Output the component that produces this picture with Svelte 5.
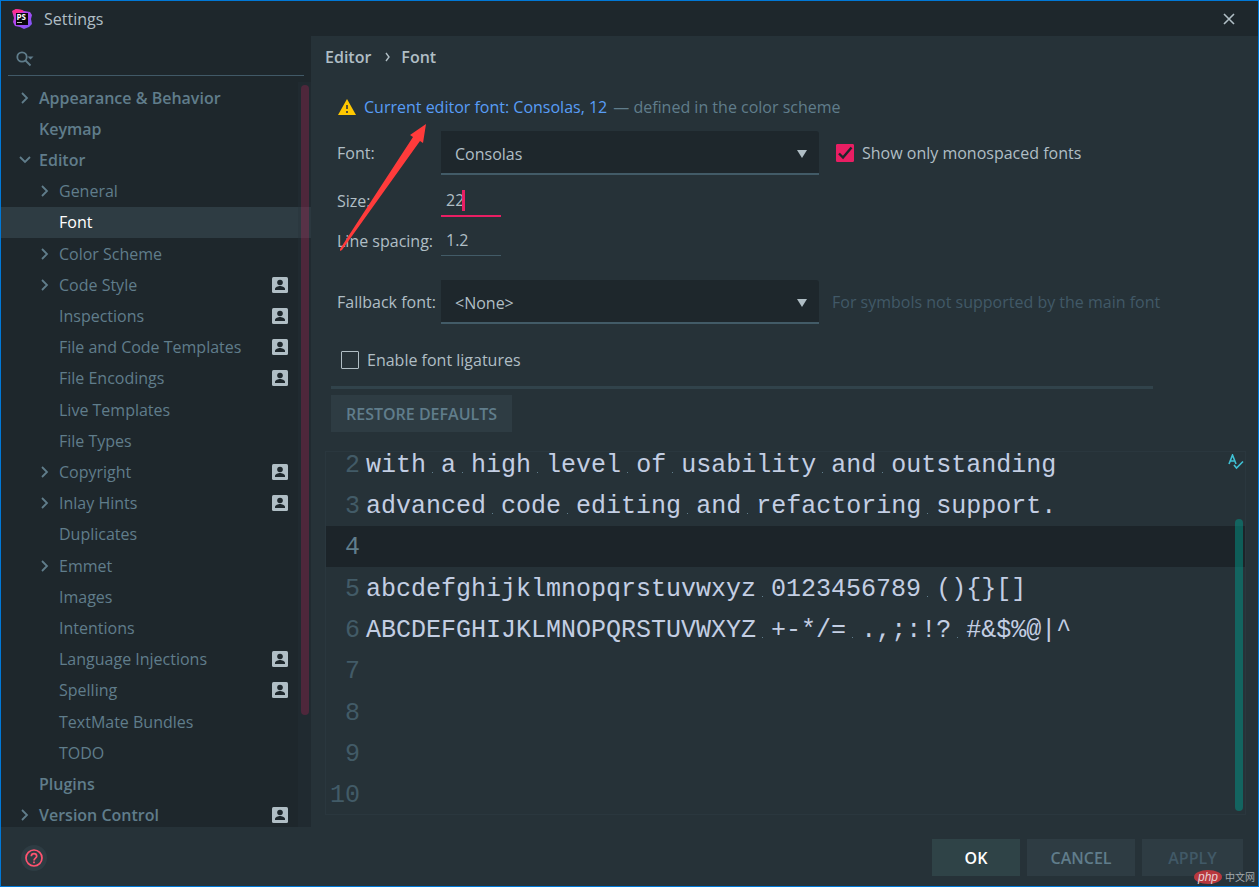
<script lang="ts">
  interface TreeItem {
    label: string;
    level?: number;
    arrow?: 'right' | 'down';
    project?: boolean;
  }

  const tree: TreeItem[] = [
    { label: 'Appearance & Behavior', arrow: 'right' },
    { label: 'Keymap' },
    { label: 'Editor', arrow: 'down' },
    { label: 'General', level: 1, arrow: 'right' },
    { label: 'Font', level: 1 },
    { label: 'Color Scheme', level: 1, arrow: 'right' },
    { label: 'Code Style', level: 1, arrow: 'right', project: true },
    { label: 'Inspections', level: 1, project: true },
    { label: 'File and Code Templates', level: 1, project: true },
    { label: 'File Encodings', level: 1, project: true },
    { label: 'Live Templates', level: 1 },
    { label: 'File Types', level: 1 },
    { label: 'Copyright', level: 1, arrow: 'right', project: true },
    { label: 'Inlay Hints', level: 1, arrow: 'right', project: true },
    { label: 'Duplicates', level: 1 },
    { label: 'Emmet', level: 1, arrow: 'right' },
    { label: 'Images', level: 1 },
    { label: 'Intentions', level: 1 },
    { label: 'Language Injections', level: 1, project: true },
    { label: 'Spelling', level: 1, project: true },
    { label: 'TextMate Bundles', level: 1 },
    { label: 'TODO', level: 1 },
    { label: 'Plugins' },
    { label: 'Version Control', arrow: 'right', project: true },
  ];

  const lines = [
    { num: 2, text: 'with a high level of usability and outstanding' },
    { num: 3, text: 'advanced code editing and refactoring support.' },
    { num: 4, text: '' },
    { num: 5, text: 'abcdefghijklmnopqrstuvwxyz 0123456789 (){}[]' },
    { num: 6, text: 'ABCDEFGHIJKLMNOPQRSTUVWXYZ +-*/= .,;:!? #&$%@|^' },
    { num: 7, text: '' },
    { num: 8, text: '' },
    { num: 9, text: '' },
    { num: 10, text: '' },
  ];

  let selected = $state('Font');
  let currentLine = $state(4);
  let search = $state('');
  let font = $state('Consolas');
  let fallback = $state('<None>');
  let size = $state('22');
  let spacing = $state('1.2');
  let monospacedOnly = $state(true);
  let ligatures = $state(false);
</script>

<div class="window">
  <header class="titlebar">
    <svg class="logo" viewBox="0 0 20 20" aria-hidden="true">
      <defs>
        <linearGradient id="ps" x1="0" y1="0" x2="1" y2="1">
          <stop offset="0" stop-color="#ff318c" />
          <stop offset="0.4" stop-color="#b345f1" />
          <stop offset="1" stop-color="#765af8" />
        </linearGradient>
      </defs>
      <path d="M0 2l4-2 6 1 2 1 6 1 2 3-1 4 1 5-3 3-5 2-4-2-5-1-2-4 1-4z" fill="url(#ps)" />
      <path d="M1 2l3-2 6 1 2 2-8 1-2 1z" fill="#ff2d90" />
      <rect x="4" y="4" width="12" height="12" fill="#08070a" />
      <rect x="5" y="13" width="5" height="1" fill="#bbb" />
      <text x="4.400" y="10.800" font-size="8" font-weight="700" fill="#fff">PS</text>
    </svg>
    <h1>Settings</h1>
    <button class="close" aria-label="Close">
      <svg viewBox="0 0 12 12" width="12" height="12"><path d="M1 1l10 10M11 1L1 11" /></svg>
    </button>
  </header>

  <div class="body">
    <nav class="sidebar">
      <label class="search">
        <svg viewBox="0 0 18 16" width="18" height="16" aria-hidden="true">
          <circle cx="6" cy="6" r="4.700" />
          <path d="M9.500 9.500l5 5" />
          <path class="solid" d="M11.500 5.500h6l-3 3z" />
        </svg>
        <input type="text" aria-label="Search settings" bind:value={search} />
      </label>

      <div class="tree-view">
        <ul class="tree">
          {#each tree as item}
            <li class:selected={selected === item.label}>
              <button
                class="tree-item"
                class:child={item.level === 1}
                onclick={() => selected = item.label}
              >
                <span class="arrow">
                  {#if item.arrow === 'right'}
                    <svg viewBox="0 0 12 12" width="12" height="12"><path d="M3 1l5 5-5 5" /></svg>
                  {:else if item.arrow === 'down'}
                    <svg viewBox="0 0 12 12" width="12" height="12"><path d="M1 3l5 5 5-5" /></svg>
                  {/if}
                </span>
                <span class="tree-label">{item.label}</span>
                {#if item.project}
                  <svg class="badge" viewBox="0 0 16 16" width="16" height="16">
                    <rect width="16" height="16" rx="1.500" fill="#b0bec5" />
                    <circle cx="8" cy="5.500" r="2.800" fill="#1e272c" />
                    <path d="M3 13v-1c0-1.900 3.200-3 5-3s5 1.100 5 3v1z" fill="#1e272c" />
                  </svg>
                {/if}
              </button>
            </li>
          {/each}
        </ul>
        <div class="tree-track"><div class="tree-thumb"></div></div>
      </div>
    </nav>

    <main class="content">
      <h2 class="breadcrumb">
        <span>Editor</span>
        <svg viewBox="0 0 6 10" width="6" height="10" aria-hidden="true"><path d="M1 1l3 4-3 4" /></svg>
        <span>Font</span>
      </h2>

      <p class="notice">
        <svg viewBox="0 0 18 16" width="18" height="16" aria-hidden="true">
          <path d="M9 0l9 16H0z" fill="#ffc800" />
          <path d="M8 6h2v4H8zM8 12h2v2H8z" fill="#5c5130" />
        </svg>
        <a href="#scheme">Current editor font: Consolas, 12</a>
        <span>— defined in the color scheme</span>
      </p>

      <form class="form" onsubmit={(e) => e.preventDefault()}>
        <div class="row">
          <label class="name" for="font">Font:</label>
          <div class="combo">
            <select id="font" bind:value={font}>
              <option>Consolas</option>
              <option>Courier New</option>
            </select>
            <svg viewBox="0 0 10 8" width="10" height="8"><path d="M0 0h10L5 8z" /></svg>
          </div>
          <label class="check">
            <span class="box">
              <input type="checkbox" bind:checked={monospacedOnly} />
              {#if monospacedOnly}
                <svg viewBox="0 0 18 18"><path d="M3 9.500l4 4L15.500 3.500" /></svg>
              {/if}
            </span>
            Show only monospaced fonts
          </label>
        </div>

        <div class="row size-row">
          <label class="name" for="size">Size:</label>
          <div class="field focused">
            <input id="size" type="text" bind:value={size} />
            <span class="caret"></span>
          </div>
        </div>

        <div class="row spacing-row">
          <label class="name" for="spacing">Line spacing:</label>
          <div class="field">
            <input id="spacing" type="text" bind:value={spacing} />
          </div>
        </div>

        <div class="row fallback-row">
          <label class="name" for="fallback">Fallback font:</label>
          <div class="combo">
            <select id="fallback" bind:value={fallback}>
              <option>{'<None>'}</option>
              <option>Consolas</option>
            </select>
            <svg viewBox="0 0 10 8" width="10" height="8"><path d="M0 0h10L5 8z" /></svg>
          </div>
          <span class="hint">For symbols not supported by the main font</span>
        </div>

        <label class="check ligatures">
          <span class="box">
            <input type="checkbox" bind:checked={ligatures} />
            {#if ligatures}
              <svg viewBox="0 0 18 18"><path d="M3 9.500l4 4L15.500 3.500" /></svg>
            {/if}
          </span>
          Enable font ligatures
        </label>
      </form>

      <hr />
      <button class="btn restore">RESTORE DEFAULTS</button>

      <section class="editor" aria-label="Font preview">
        <div class="lines">
          {#each lines as line}
            <div class="line" class:current={line.num === currentLine}>
              <span class="num">{line.num}</span>
              <code>{#each line.text.split(' ') as word, i}{#if i > 0}<span class="space">&nbsp;</span>{/if}{word}{/each}</code>
            </div>
          {/each}
        </div>
        <svg class="inspect" viewBox="0 0 16 16" width="16" height="16">
          <path d="M1 10L4.500 1 8 10M2.500 7h4M6 11l2.500 3L15 7.500" />
        </svg>
        <div class="editor-thumb"></div>
      </section>

      <!-- Callout pointing at the current font link -->
      <svg class="callout" viewBox="0 0 87 128" width="87" height="128" aria-hidden="true">
        <path d="M86 0L70 11l3 2L0 125v2l2-1L80 17l3 2z" fill="#ff3b3b" />
      </svg>
    </main>
  </div>

  <footer class="footer">
    <button class="help" aria-label="Help">
      <svg viewBox="0 0 18 18" width="18" height="18">
        <circle cx="9" cy="9" r="8" />
        <path d="M6.300 7.200c0-3.500 5.400-3.500 5.400 0 0 1.800-2.700 2-2.700 4.200M9 12.600v1.700" />
      </svg>
    </button>
    <button class="btn ok">OK</button>
    <button class="btn cancel">CANCEL</button>
    <button class="btn apply" disabled>APPLY</button>
  </footer>

  <div class="watermark"><span class="php">php</span><span>中文网</span></div>
</div>

<style>
  :global(body) {
    margin: 0;
    background: #263238;
  }

  .window {
    position: relative;
    box-sizing: border-box;
    display: flex;
    flex-direction: column;
    min-height: 100vh;
    border: 1px solid #0078d7;
    background: #263238;
    color: #b0bec5;
    font: 16px/20px 'Open Sans', 'Noto Sans', sans-serif;
  }

  button,
  input,
  select {
    font: inherit;
    color: inherit;
    margin: 0;
    padding: 0;
    border: 0;
    border-radius: 0;
    background: none;
    outline: none;
  }

  button {
    cursor: pointer;
  }

  .titlebar {
    display: flex;
    align-items: center;
    height: 35px;
    padding: 0 23px 0 11px;
    background: #1e272c;
  }

  .logo {
    width: 20px;
    height: 20px;
  }

  h1 {
    flex: 1;
    margin: 0 0 0 12px;
    font-size: 16px;
    font-weight: 400;
  }

  .close {
    display: flex;
  }

  .close path {
    stroke: #b0bec5;
    stroke-width: 1.6;
  }

  .body {
    flex: 1;
    display: flex;
  }

  .sidebar {
    display: flex;
    flex-direction: column;
    width: 310px;
    flex-shrink: 0;
    background: #1e272c;
    color: #607d8b;
  }

  .search {
    display: flex;
    align-items: center;
    height: 39px;
    margin: 0 7px 6px;
    padding-left: 8px;
    border-bottom: 1px solid #415967;
  }

  .search svg {
    margin-top: 6px;
    fill: none;
    stroke: #607d8b;
    stroke-width: 1.8;
  }

  .search .solid {
    fill: #607d8b;
    stroke: none;
  }

  .search input {
    flex: 1;
    min-width: 0;
    margin-left: 8px;
  }

  .tree-view {
    position: relative;
    flex: 1;
    display: flex;
    overflow: hidden;
  }

  /* The last row runs a little past the visible area */
  .tree {
    flex: 1;
    display: flex;
    flex-direction: column;
    margin: 0 0 -4px;
    padding: 0;
    list-style: none;
  }

  .tree li {
    flex: 1;
    display: flex;
  }

  .tree li.selected {
    background: #2e3c43;
    color: #fff;
  }

  .tree-item {
    flex: 1;
    display: flex;
    align-items: center;
    padding: 0 23px 0 18px;
    text-align: left;
    font-weight: 600;
  }

  .tree-item.child {
    padding-left: 38px;
    font-weight: 400;
  }

  .arrow {
    display: flex;
    width: 20px;
  }

  .arrow path {
    fill: none;
    stroke: #607d8b;
    stroke-width: 1.8;
  }

  .tree-label {
    flex: 1;
  }

  .tree-track {
    position: absolute;
    top: 0;
    right: 0;
    bottom: 0;
    width: 13px;
    background: rgb(38 50 56 / 0.35);
  }

  .tree-thumb {
    height: 84.5%;
    margin: 3px 2px 0 3px;
    border-radius: 4px;
    background: rgb(233 30 99 / 0.23);
  }

  .content {
    position: relative;
    flex: 1;
    min-width: 0;
    display: flex;
    flex-direction: column;
    padding: 11px 12px 12px 14px;
  }

  .breadcrumb {
    display: flex;
    align-items: center;
    margin: 0;
    font-size: 16px;
    font-weight: 600;
  }

  .breadcrumb svg {
    margin: 0 10px 0 14px;
    fill: none;
    stroke: #b0bec5;
    stroke-width: 1.4;
  }

  .notice {
    display: flex;
    align-items: center;
    margin: 30px 0 14px 13px;
    color: #607d8b;
  }

  .notice a {
    margin: 0 6px 0 8px;
    color: #589df6;
    text-decoration: none;
  }

  .form {
    padding-left: 12px;
  }

  .row {
    display: flex;
    align-items: center;
  }

  .name {
    width: 104px;
    flex-shrink: 0;
    white-space: nowrap;
  }

  .combo {
    position: relative;
    width: 378px;
    min-width: 120px;
  }

  .combo select {
    display: block;
    appearance: none;
    width: 100%;
    height: 44px;
    padding: 4px 14px 0;
    border-bottom: 2px solid #425b67;
    border-top-right-radius: 3px;
    background: #1e272c;
  }

  .combo svg {
    position: absolute;
    top: 19px;
    right: 12px;
    fill: #b0bec5;
    pointer-events: none;
  }

  .check {
    display: flex;
    align-items: center;
    gap: 8px;
    margin-left: 17px;
  }

  .box {
    position: relative;
    display: flex;
  }

  .box input {
    appearance: none;
    box-sizing: border-box;
    width: 18px;
    height: 18px;
    border: 1px solid #b0bec5;
    border-radius: 1px;
  }

  .box input:checked {
    border-color: #e91e63;
    background: #e91e63;
  }

  .box svg {
    position: absolute;
    inset: 0;
    fill: none;
    stroke: #1e272c;
    stroke-width: 2.4;
    pointer-events: none;
  }

  .size-row {
    margin-top: 10px;
  }

  .spacing-row {
    margin-top: 8px;
  }

  .fallback-row {
    margin-top: 24px;
  }

  .field {
    position: relative;
    width: 60px;
    border-bottom: 1px solid #425b67;
  }

  .field.focused {
    border-bottom: 2px solid #e91e63;
  }

  .field input {
    display: block;
    box-sizing: border-box;
    width: 100%;
    height: 30px;
    padding: 0 5px;
  }

  .caret {
    position: absolute;
    top: 5px;
    left: 21px;
    width: 3px;
    height: 21px;
    background: #e91e63;
  }

  .hint {
    margin-left: 13px;
    color: #415967;
  }

  .ligatures {
    margin: 26px 0 0 4px;
  }

  hr {
    width: calc(100% - 99px);
    height: 3px;
    margin: 16px 0 6px 6px;
    border: 0;
    background: #31434b;
  }

  .btn {
    height: 37px;
    background: #2e3c43;
    color: #607d8b;
    font-weight: 600;
  }

  .restore {
    align-self: flex-start;
    margin-left: 6px;
    padding: 0 15px;
  }

  .editor {
    position: relative;
    flex: 1;
    display: flex;
    margin-top: 19px;
    border: 1px solid #2a373e;
    overflow: hidden;
    font: 25px/28px 'Liberation Mono', monospace;
  }

  /* Scrolled a few pixels down, so the first line is cut at the top */
  .lines {
    flex: 1;
    display: flex;
    flex-direction: column;
    margin: -9px 0 -1px;
  }

  .line {
    flex: 1;
    display: flex;
    align-items: center;
    padding-top: 4px;
  }

  .line.current {
    background: #1c2429;
  }

  .num {
    width: 34px;
    margin-right: 6px;
    text-align: right;
    color: #425b67;
  }

  .current .num {
    color: #607d8b;
  }

  code {
    font: inherit;
    color: #c3cee3;
    white-space: pre;
  }

  .space {
    background: linear-gradient(#607d8b, #607d8b) 6px 75% / 1px 1px no-repeat;
  }

  .inspect {
    position: absolute;
    top: 2px;
    right: 1px;
    fill: none;
    stroke: #3fc1d5;
    stroke-width: 1.6;
  }

  .editor-thumb {
    position: absolute;
    top: 18.5%;
    right: 2px;
    bottom: 3px;
    width: 8px;
    border-radius: 4px;
    background: rgb(0 150 136 / 0.5);
  }

  .callout {
    position: absolute;
    top: 88px;
    left: 29px;
    pointer-events: none;
  }

  .footer {
    display: flex;
    align-items: center;
    gap: 7px;
    padding: 12px 15px 10px 20px;
  }

  .help {
    display: flex;
    margin-right: auto;
    padding: 4px;
    border-radius: 50%;
    background: #2e3c43;
  }

  .help svg {
    fill: none;
    stroke: #ff5370;
    stroke-width: 1.7;
  }

  .ok {
    width: 88px;
    background: #2f4347;
    color: #fff;
  }

  .cancel {
    width: 108px;
  }

  .apply {
    width: 101px;
    color: #415967;
  }

  .watermark {
    position: absolute;
    right: 3px;
    bottom: 2px;
    display: flex;
    align-items: center;
    gap: 3px;
    color: #a3a9ac;
    font: 10px/14px 'Noto Sans CJK SC', sans-serif;
  }

  .php {
    width: 28px;
    border-radius: 50%;
    background: #b8383e;
    color: #e8d0d2;
    text-align: center;
    font: italic 12px/14px 'Liberation Sans', sans-serif;
  }
</style>
